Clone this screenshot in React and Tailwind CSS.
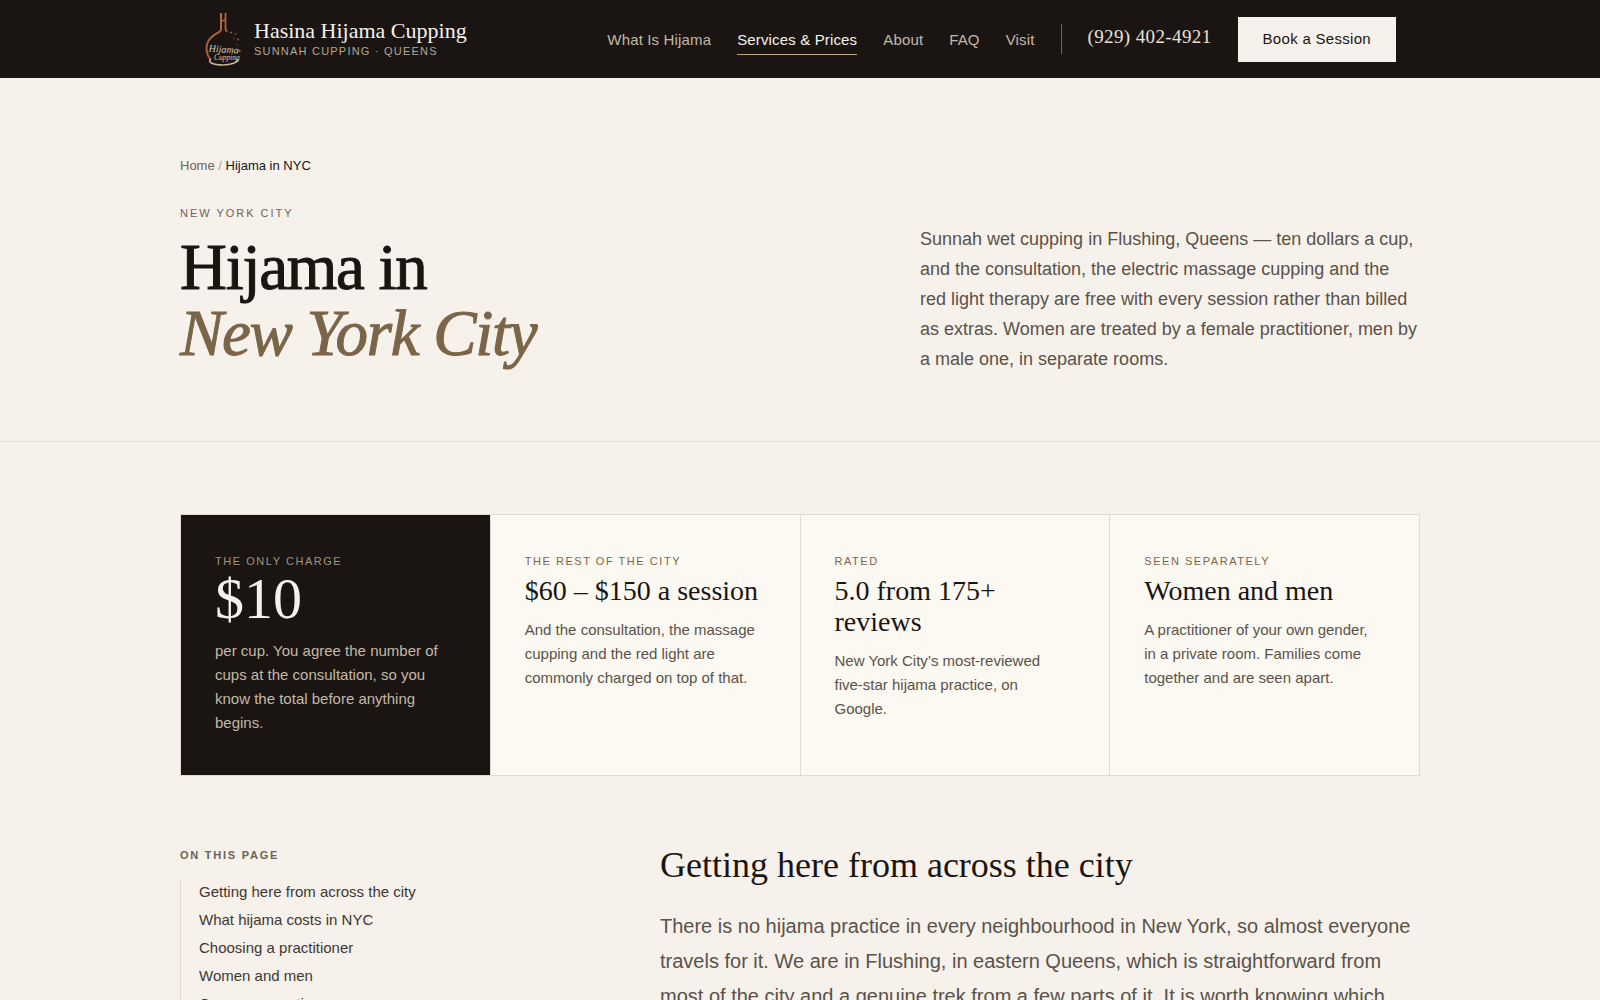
import React from 'react';

const navLinks = [
  { label: 'What Is Hijama', href: '#what' },
  { label: 'Services & Prices', href: '#services', active: true },
  { label: 'About', href: '#about' },
  { label: 'FAQ', href: '#faq' },
  { label: 'Visit', href: '#visit' },
];

const facts = [
  {
    label: 'The rest of the city',
    title: '$60 – $150 a session',
    text: 'And the consultation, the massage cupping and the red light are commonly charged on top of that.',
  },
  {
    label: 'Rated',
    title: '5.0 from 175+ reviews',
    text: 'New York City’s most-reviewed five-star hijama practice, on Google.',
  },
  {
    label: 'Seen separately',
    title: 'Women and men',
    text: 'A practitioner of your own gender, in a private room. Families come together and are seen apart.',
  },
];

const sections = [
  'Getting here from across the city',
  'What hijama costs in NYC',
  'Choosing a practitioner',
  'Women and men',
  'Common questions',
];

const Logo = () => (
  <svg viewBox="0 0 38 56" className="w-[38px] h-14 shrink-0" fill="none" aria-hidden="true">
    <defs>
      <linearGradient id="copper" x1="0" y1="0" x2="0" y2="1">
        <stop offset="0" stopColor="#bd6a42" />
        <stop offset="1" stopColor="#a05a36" />
      </linearGradient>
    </defs>
    <path d="M17 2v16.500c0 1.500-1 2-2.500 2.800C7 25 2.500 30 2.500 37c0 5 1.500 9 4.500 12" stroke="url(#copper)" strokeWidth="2" />
    <path d="M21.500 2v16c0 1.500.5 2 2 2.600" stroke="#b4613a" strokeWidth="1.800" />
    <path d="M17 9.500h4.500" stroke="#b4613a" strokeWidth="1.600" />
    <circle cx="27" cy="21.500" r="1.100" fill="#9a5334" />
    <circle cx="31.500" cy="23" r=".9" fill="#7a4630" />
    <circle cx="30" cy="27.500" r=".8" fill="#7a4630" />
    <circle cx="34" cy="28.500" r="1" fill="#9a5334" />
    <circle cx="33" cy="33.500" r=".8" fill="#7a4630" />
    <circle cx="35.500" cy="40" r="1.200" fill="#b4613a" />
    <path d="M6.500 48c-3 3.500 3 6 12 6s15.500-2.500 15-6" stroke="#c9b497" strokeWidth="1.600" />
    <g fill="#d8cbb7" fontFamily="'Liberation Serif', serif" fontStyle="italic">
      <text x="4.500" y="41.500" fontSize="10" transform="rotate(4 18 41)">Hijama</text>
      <text x="10" y="49" fontSize="7.500">Cupping</text>
    </g>
  </svg>
);

const Header = () => (
  <header className="bg-[#1a1512] text-[#f6f1ea]">
    <div className="max-w-[1240px] mx-auto px-6 h-[78px] flex items-center justify-between">
      <a href="#home" className="flex items-center gap-3">
        <Logo />
        <span className="flex flex-col">
          <span className="font-['Liberation_Serif',serif] text-[22px] leading-6">Hasina Hijama Cupping</span>
          <span className="text-[11px] leading-4 tracking-[0.11em] uppercase text-[#b3a796]">Sunnah Cupping · Queens</span>
        </span>
      </a>

      <nav className="flex items-center gap-[26px] text-[15px] leading-6 tracking-[0.01em]">
        {navLinks.map(link => (
          <a
            key={link.label}
            href={link.href}
            className={link.active
              ? 'pt-1 pb-0.5 border-b border-[#c2a878] text-[#f6f1ea]'
              : 'pt-1 pb-0.5 border-b border-transparent text-[#c4b8a6]'}
          >
            {link.label}
          </a>
        ))}
        <span className="w-px h-[30px] bg-[#6f675d]" />
        <a href="tel:+19294024921" className="pb-1 font-['Liberation_Serif',serif] text-[19px] tracking-[0.02em] text-[#e9e1d5]">
          (929) 402-4921
        </a>
        <button type="button" className="h-[45px] px-[25px] bg-[#f6f1ea] text-[#1a1512] tracking-[0.02em]">
          Book a Session
        </button>
      </nav>
    </div>
  </header>
);

const Hero = () => (
  <section className="border-b border-[#e0dad0]">
    <div className="max-w-[1240px] mx-auto pt-[78px] pb-[67px]">
      <div className="text-[13px] leading-5">
        <a href="#home" className="text-[#6b6259]">Home</a>
        <span className="text-[#a89f94]"> / </span>
        <span className="text-[#1a1512]">Hijama in NYC</span>
      </div>
      <div className="mt-[27px] flex items-end justify-between">
        <div className="pb-2">
          <p className="text-[11px] leading-5 tracking-[0.18em] uppercase text-[#6b6259]">New York City</p>
          <h1 className="mt-[11px] font-['Liberation_Serif',serif] text-[65px] leading-[66px] tracking-[-0.02em] text-[#1a1512] [-webkit-text-stroke:1px]">
            Hijama in
            <em className="block text-[#7b6548]">New York City</em>
          </h1>
        </div>
        <p className="w-[500px] text-lg leading-[30px] text-[#5a524a]">
          Sunnah wet cupping in Flushing, Queens — ten dollars a cup, and the consultation, the electric massage cupping
          and the red light therapy are free with every session rather than billed as extras. Women are treated by a
          female practitioner, men by a male one, in separate rooms.
        </p>
      </div>
    </div>
  </section>
);

const FactCards = () => (
  <div className="grid grid-cols-4 gap-px bg-[#e0dad0] border border-[#e0dad0]">
    <div className="bg-[#1a1512] pl-[34px] pr-10 pt-[34px] pb-10">
      <p className="text-[11px] leading-6 tracking-[0.14em] uppercase text-[#a3937d]">The only charge</p>
      <p className="mt-0.5 font-['Liberation_Serif',serif] text-[58px] leading-[48px] text-[#f6f1ea]">$10</p>
      <p className="mt-4 text-[15px] leading-6 text-[#c4b8a6]">
        per cup. You agree the number of cups at the consultation, so you know the total before anything begins.
      </p>
    </div>
    {facts.map(fact => (
      <div key={fact.label} className="bg-[#fcf9f2] pl-[34px] pr-10 pt-[34px] pb-10">
        <p className="text-[11px] leading-6 tracking-[0.14em] uppercase text-[#7b6548]">{fact.label}</p>
        <p className="mt-0.5 font-['Liberation_Serif',serif] text-[28px] leading-[31px] text-[#1a1512]">{fact.title}</p>
        <p className="mt-3 text-[15px] leading-6 text-[#5a524a]">{fact.text}</p>
      </div>
    ))}
  </div>
);

const App = () => {
  return (
    <div className="min-h-screen bg-[#f6f1ea] font-['Liberation_Sans',Arial,sans-serif]">
      <Header />
      <Hero />
      <main className="max-w-[1240px] mx-auto pt-[72px]">
        <FactCards />

        <div className="mt-[69px] grid grid-cols-[360px_1fr] gap-[120px]">
          <aside>
            <p className="text-[11px] leading-5 font-bold tracking-[0.16em] uppercase text-[#6b6259]">On this page</p>
            <ul className="mt-[15px] pl-[18px] border-l border-[#e0dad0] flex flex-col gap-1 text-[15px] leading-6 text-[#3f3832]">
              {sections.map(title => (
                <li key={title}><a href="#section">{title}</a></li>
              ))}
            </ul>
          </aside>

          <article>
            <h2 className="font-['Liberation_Serif',serif] text-4xl leading-10 text-[#1a1512]">Getting here from across the city</h2>
            <p className="mt-6 text-xl leading-[35px] text-[#5a524a]">
              There is no hijama practice in every neighbourhood in New York, so almost everyone travels for it. We are in
              Flushing, in eastern Queens, which is straightforward from most of the city and a genuine trek from a few
              parts of it. It is worth knowing which
            </p>
          </article>
        </div>
      </main>
    </div>
  );
};

export default App;
